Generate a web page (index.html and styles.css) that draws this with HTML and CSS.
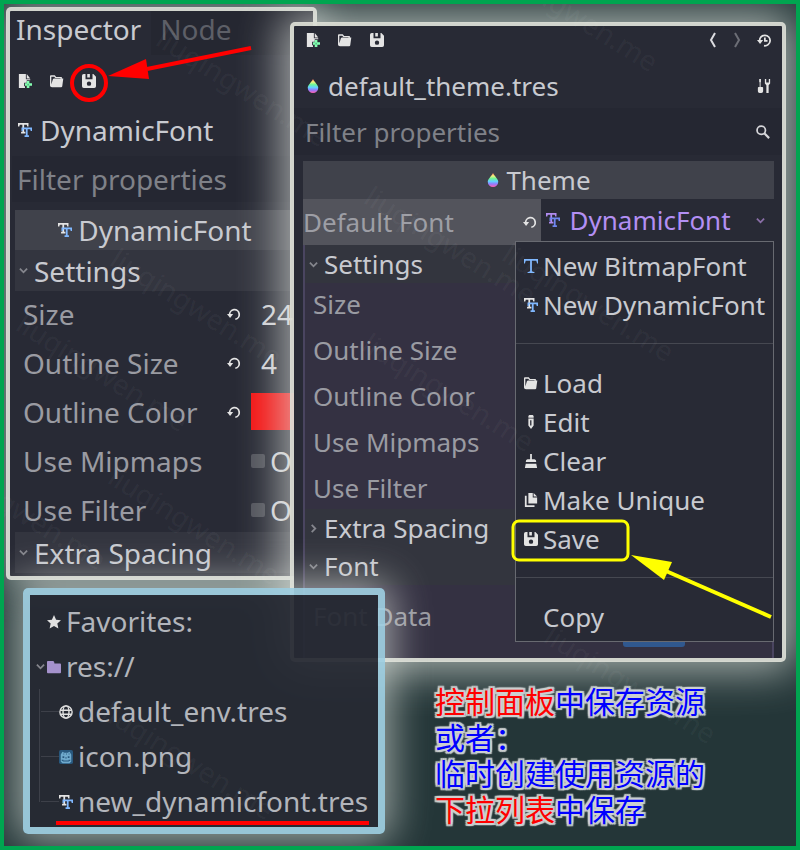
FILE: index.html
```html
<!DOCTYPE html>
<html lang="zh-CN">
<head>
<meta charset="utf-8">
<meta name="viewport" content="width=device-width, initial-scale=1">
<title>Inspector</title>
<link rel="stylesheet" href="styles.css">
</head>
<body>
<svg class="defs" aria-hidden="true">
  <defs>
    <linearGradient id="rainbow" x1="0" y1="0" x2="0" y2="1">
      <stop offset="0" stop-color="#ff6b5e"/><stop offset=".2" stop-color="#f6f27a"/>
      <stop offset=".4" stop-color="#6df59a"/><stop offset=".6" stop-color="#62d0ff"/>
      <stop offset=".78" stop-color="#8f7bff"/><stop offset="1" stop-color="#ff5fb0"/>
    </linearGradient>
  </defs>
  <symbol id="i-new" viewBox="0 0 16 16">
    <path fill="#e4e4e4" d="M1 0v16h7v-2H7v-4h3V7h4V6H9V0zM10 0v5h4z"/>
    <path fill="#84ffb1" d="M10 8h3v2.500h3v3h-3V16h-3v-2.500H8v-3h2z"/>
    <path fill="#2b8a5c" d="M11 11h1v2h-1z"/>
  </symbol>
  <symbol id="i-load" viewBox="0 0 16 16">
    <path fill="#e4e4e4" d="M1 1.500h4.500l1.500 2h6.500V5h1.700L14 14q-.2 1-1.300 1H2.300Q0 15 0 13V2.500q0-1 1-1zM1.500 3v9L3.300 6Q3.600 5 4.600 5H12v-.3H6L4.800 3z"/>
  </symbol>
  <symbol id="i-save" viewBox="0 0 16 16">
    <path fill="#e4e4e4" fill-rule="evenodd" d="M2 0Q0 0 0 2v12q0 2 2 2h12q2 0 2-2V3l-3-3h-1v6H4V0zM6 0h3v4H6zM8 8.500a2.500 2.500 0 1 1 0 5 2.500 2.500 0 0 1 0-5z"/>
  </symbol>
  <symbol id="i-font" viewBox="0 0 16 16">
    <path fill="var(--font-a, #e4e4e4)" d="M0 0h12v4h-1.500L10 2H7v8h1.500v2h-5v-2H5V2H2L1.500 4H0z"/>
    <path fill="var(--font-b, #80b8ff)" d="M4 5h12v4h-1.500L14 7h-3v7h1.500v2h-5v-2H9V7H6L5.500 9H4z"/>
  </symbol>
  <symbol id="i-bitmap" viewBox="0 0 16 16">
    <path fill="#80b8ff" d="M0 0h16v5h-1l-1-3H9v12l3 1v1H4v-1l3-1V2H2L1 5H0z"/>
  </symbol>
  <symbol id="i-reset" viewBox="0 0 16 16">
    <path fill="none" stroke="#e4e4e4" stroke-width="2" d="M3 9a5.500 5.500 0 1 1 6.500 5"/>
    <path fill="#e4e4e4" d="M0 8h7l-3.500 4.500z"/>
  </symbol>
  <symbol id="i-history" viewBox="0 0 16 16">
    <path fill="none" stroke="#e4e4e4" stroke-width="2" d="M3 9a6 6 0 1 1 5 5.500M9 5v4h3"/>
    <path fill="#e4e4e4" d="M0 8h7l-3.500 4.500z"/>
  </symbol>
  <symbol id="i-back" viewBox="0 0 8 16"><path fill="none" stroke="currentColor" stroke-width="2" d="M6 1 2 8l4 7"/></symbol>
  <symbol id="i-fwd" viewBox="0 0 8 16"><path fill="none" stroke="currentColor" stroke-width="2" d="m2 1 4 7-4 7"/></symbol>
  <symbol id="i-tools" viewBox="0 0 16 16">
    <path fill="#e4e4e4" d="M2.500 0h2v3l-.4 1v5H6q1 0 1 1v4q0 2-2 2H3q-2 0-2-2v-4q0-1 1-1h1V4l-.5-1zM9 0h1.500v4h3V0H15v5l-1.700 2v9h-2.600V7L9 5z"/>
  </symbol>
  <symbol id="i-search" viewBox="0 0 16 16">
    <circle cx="6" cy="6" r="4.800" fill="none" stroke="#d6d6da" stroke-width="2"/>
    <path stroke="#d6d6da" stroke-width="2.500" d="m9.500 9.500 5.500 5.500"/>
  </symbol>
  <symbol id="i-down" viewBox="0 0 10 10"><path fill="none" stroke="currentColor" stroke-width="2" d="m1 3 4 4 4-4"/></symbol>
  <symbol id="i-right" viewBox="0 0 10 10"><path fill="none" stroke="currentColor" stroke-width="2" d="m3 1 4 4-4 4"/></symbol>
  <symbol id="i-theme" viewBox="0 0 16 16"><path fill="url(#rainbow)" d="M8 0c2 4 6 7 6 10a6 6 0 0 1-12 0c0-3 4-6 6-10z"/></symbol>
  <symbol id="i-edit" viewBox="0 0 16 16">
    <path fill="#e4e4e4" fill-rule="evenodd" d="M6 0h4l1 1v2H5V1zM5 4h6v8l-3 4-3-4zM7 6v6h1.500V6z"/>
  </symbol>
  <symbol id="i-clear" viewBox="0 0 16 16">
    <path fill="#e4e4e4" d="M7 0h2v6h3q2 0 2 3H2q0-3 2-3h3zM2 11h12l1 5H1z"/>
  </symbol>
  <symbol id="i-copy" viewBox="0 0 16 16">
    <path fill="#e4e4e4" d="M1 3h2v11h9v2H1zM5 0h5v5h5v7H5zM11 0l4 4h-4z"/>
  </symbol>
  <symbol id="i-star" viewBox="0 0 16 16"><path fill="#e0e0e0" d="m8 0 2.400 5.300 5.600.7-4.200 3.800L13 15.500l-5-2.900-5 2.900 1.200-5.700L0 6l5.600-.7z"/></symbol>
  <symbol id="i-folder" viewBox="0 0 16 16"><path fill="#a592cc" d="M1 1h6q1.500 0 1.500 3H15q1 0 1 1v9q0 1-1 1H1q-1 0-1-1V2q0-1 1-1z"/></symbol>
  <symbol id="i-globe" viewBox="0 0 16 16">
    <g fill="none" stroke="#e0e0e0" stroke-width="1.600"><circle cx="8" cy="8" r="7"/><ellipse cx="8" cy="8" rx="3.400" ry="7"/><path d="M1.500 6h13M1.500 10.500h13"/></g>
  </symbol>
  <symbol id="i-godot" viewBox="0 0 16 16">
    <rect width="16" height="16" rx="2" fill="#28587e"/>
    <path fill="#6fa9cc" d="M2 5l2-3 2 1h4l2-1 2 3v8l-2 2H4l-2-2z"/>
    <path fill="#28587e" d="M4 7h2v2H4zM10 7h2v2h-2zM7.500 8h1v2h-1zM3 11h2v1h6v-1h2v1l-2 1H5l-2-1zM5 4h1v1H5zM8 4h1v1H8zM11 4h1v1h-1z"/>
  </symbol>
</svg>

<main class="stage">

  <section class="window inspector" aria-label="Inspector">
    <div class="tabs" role="tablist">
      <button class="tab active" role="tab" aria-selected="true">Inspector</button>
      <button class="tab" role="tab" aria-selected="false">Node</button>
    </div>
    <div class="toolbar">
      <button aria-label="New"><svg class="icon"><use href="#i-new"/></svg></button>
      <button aria-label="Load"><svg class="icon"><use href="#i-load"/></svg></button>
      <button aria-label="Save"><svg class="icon"><use href="#i-save"/></svg></button>
    </div>
    <div class="object"><svg class="icon"><use href="#i-font"/></svg><span>DynamicFont</span></div>
    <div class="filter"><input type="text" placeholder="Filter properties" aria-label="Filter properties"></div>
    <div class="body">
      <div class="category"><svg class="icon"><use href="#i-font"/></svg>DynamicFont</div>
      <button class="group"><svg class="arrow"><use href="#i-down"/></svg>Settings</button>
      <div class="rows">
        <div class="row"><label for="size">Size</label><button aria-label="Reset size"><svg class="icon"><use href="#i-reset"/></svg></button><input class="number" id="size" type="text" value="24"></div>
        <div class="row"><label for="osize">Outline Size</label><button aria-label="Reset outline size"><svg class="icon"><use href="#i-reset"/></svg></button><input class="number" id="osize" type="text" value="4"></div>
        <div class="row"><label for="ocolor">Outline Color</label><button aria-label="Reset outline color"><svg class="icon"><use href="#i-reset"/></svg></button><input class="swatch" id="ocolor" type="color" value="#f41414"></div>
        <div class="row"><label for="mip">Use Mipmaps</label><span></span><span class="check"><input id="mip" type="checkbox">On</span></div>
        <div class="row"><label for="filt">Use Filter</label><span></span><span class="check"><input id="filt" type="checkbox">On</span></div>
      </div>
      <button class="group"><svg class="arrow"><use href="#i-down"/></svg>Extra Spacing</button>
    </div>
  </section>

  <section class="window theme" aria-label="Theme">
    <div class="toolbar">
      <button aria-label="New"><svg class="icon"><use href="#i-new"/></svg></button>
      <button aria-label="Load"><svg class="icon"><use href="#i-load"/></svg></button>
      <button aria-label="Save"><svg class="icon"><use href="#i-save"/></svg></button>
      <span class="history">
        <button aria-label="Back"><svg class="nav"><use href="#i-back"/></svg></button>
        <button class="off" aria-label="Forward"><svg class="nav"><use href="#i-fwd"/></svg></button>
        <button aria-label="History"><svg class="icon"><use href="#i-history"/></svg></button>
      </span>
    </div>
    <div class="object"><svg class="icon"><use href="#i-theme"/></svg><span>default_theme.tres</span><button aria-label="Tools"><svg class="icon"><use href="#i-tools"/></svg></button></div>
    <div class="filter"><input type="text" placeholder="Filter properties" aria-label="Filter properties"><svg class="icon"><use href="#i-search"/></svg></div>
    <div class="body">
      <div class="category"><svg class="icon"><use href="#i-theme"/></svg>Theme</div>
      <div class="resource">
        <div class="resource-label"><span>Default Font</span><button aria-label="Reset default font"><svg class="icon"><use href="#i-reset"/></svg></button></div>
        <div class="resource-value">
          <button class="picker" aria-haspopup="menu" aria-expanded="true"><svg class="icon"><use href="#i-font"/></svg><span>DynamicFont</span><svg class="arrow"><use href="#i-down"/></svg></button>
        </div>
      </div>
      <div class="sub">
        <button class="group"><svg class="arrow"><use href="#i-down"/></svg>Settings</button>
        <div class="rows">
          <div class="row">Size</div>
          <div class="row">Outline Size</div>
          <div class="row">Outline Color</div>
          <div class="row">Use Mipmaps</div>
          <div class="row">Use Filter</div>
        </div>
        <button class="group"><svg class="arrow"><use href="#i-right"/></svg>Extra Spacing</button>
        <button class="group"><svg class="arrow"><use href="#i-down"/></svg>Font</button>
        <div class="row data">Font Data<span class="bar"></span></div>
      </div>
    </div>
    <div class="menu" role="menu">
      <button role="menuitem"><svg class="icon"><use href="#i-bitmap"/></svg>New BitmapFont</button>
      <button role="menuitem"><svg class="icon"><use href="#i-font"/></svg>New DynamicFont</button>
      <hr>
      <button role="menuitem"><svg class="icon"><use href="#i-load"/></svg>Load</button>
      <button role="menuitem"><svg class="icon"><use href="#i-edit"/></svg>Edit</button>
      <button role="menuitem"><svg class="icon"><use href="#i-clear"/></svg>Clear</button>
      <button role="menuitem"><svg class="icon"><use href="#i-copy"/></svg>Make Unique</button>
      <button role="menuitem"><svg class="icon"><use href="#i-save"/></svg>Save</button>
      <hr>
      <button role="menuitem"><svg class="icon"></svg>Copy</button>
    </div>
  </section>

  <section class="window files" aria-label="Files">
    <ul class="tree">
      <li><span class="arrow"></span><svg class="icon"><use href="#i-star"/></svg>Favorites:</li>
      <li><svg class="arrow"><use href="#i-down"/></svg><svg class="icon"><use href="#i-folder"/></svg>res://
        <ul>
          <li><svg class="icon"><use href="#i-globe"/></svg>default_env.tres</li>
          <li><svg class="icon"><use href="#i-godot"/></svg>icon.png</li>
          <li><svg class="icon"><use href="#i-font"/></svg><span class="marked">new_dynamicfont.tres</span></li>
        </ul>
      </li>
    </ul>
  </section>

  <p class="note"><em>控制面板</em>中保存资源<br>或者：<br>临时创建使用资源的<br><em>下拉列表</em>中保存</p>

  <div class="marks" aria-hidden="true">
    <span class="mark m1">liuqingwen.me</span><span class="mark m2">liuqingwen.me</span>
    <span class="mark m3">liuqingwen.me</span><span class="mark m4">liuqingwen.me</span>
    <span class="mark m5">liuqingwen.me</span><span class="mark m6">liuqingwen.me</span>
    <span class="mark m7">liuqingwen.me</span><span class="mark m8">liuqingwen.me</span>
    <span class="mark m9">liuqingwen.me</span><span class="mark m10">liuqingwen.me</span>
    <span class="mark m11">liuqingwen.me</span>
  </div>

  <svg class="callouts" width="800" height="850" viewBox="0 0 800 850" aria-hidden="true">
    <g fill="none" stroke="#f00" stroke-width="4">
      <circle cx="89" cy="83" r="17"/>
      <path d="M147 69 251 48"/>
    </g>
    <path fill="#f00" d="m108 76 38-17 3 20z"/>
    <g fill="none" stroke="#ff0">
      <rect x="513" y="521" width="115" height="39" rx="6" stroke-width="3"/>
      <path stroke-width="4" d="m666 571 105 46"/>
    </g>
    <path fill="#ff0" d="m631 555 41 7-8 18z"/>
  </svg>
</main>
</body>
</html>
```
FILE: styles.css
```css
* { box-sizing: border-box; }

body {
  margin: 0;
  font-family: "Noto Sans", "Noto Sans CJK SC", sans-serif;
}

button, input {
  margin: 0;
  padding: 0;
  border: 0;
  background: none;
  color: inherit;
  font: inherit;
  text-align: left;
}

button { display: flex; align-items: center; }
input { min-width: 0; outline: 0; }
.defs { position: absolute; width: 0; height: 0; }
.icon { flex: none; width: 14px; height: 14px; }
.arrow { flex: none; width: 9px; height: 9px; color: #85868d; }

.stage {
  position: relative;
  min-height: 850px;
  overflow: hidden;
  border: 4px solid #00a550;
  background: #243638;
  color: #c8cad0;
}

/* Windows on the canvas */
.window {
  position: absolute;
  border: 4px solid rgba(219, 221, 213, .95);
  border-radius: 5px;
  background: #282a35;
  background-clip: padding-box;
  white-space: nowrap;
}

.inspector {
  left: 2px;
  top: 3px;
  width: 311px;
  font-size: 28px;
  box-shadow: 0 0 36px 4px rgba(224, 232, 226, .6);
}

.theme {
  left: 286px;
  top: 18px;
  right: 10px;
  font-size: 26px;
  box-shadow: 0 0 44px 8px rgba(228, 232, 226, .7);
}

.files {
  left: 19px;
  top: 584px;
  width: 362px;
  padding: 4px 0 3px;
  border: 7px solid rgba(160, 208, 226, .93);
  background: rgba(38, 41, 51, .94);
  background-clip: padding-box;
  color: #b2b5bb;
  font-size: 28px;
  box-shadow: 0 0 40px 6px rgba(228, 232, 226, .65);
}

/* Shared inspector parts */
.toolbar { display: flex; align-items: center; gap: 18px; padding: 0 8px; }
.object { display: flex; align-items: center; gap: 8px; }
.filter { display: flex; align-items: center; background: #252732; }
.filter input { flex: 1; color: #868890; }
.filter input::placeholder { color: #7f8188; opacity: 1; }
.category { display: flex; align-items: center; justify-content: center; gap: 6px; background: #40424b; }
.group { width: 100%; gap: 6px; padding-left: 4px; background: #33353f; }
.rows { display: flex; flex-direction: column; gap: 4px; }
.row { color: #9a9ba2; }

/* Left inspector */
.tabs { display: flex; height: 44px; }
.tab { padding: 0 10px 8px 6px; }
.tab + .tab { flex: 1; padding: 0 9px 8px; background: #252731; color: #5d5f67; }
.inspector .toolbar { height: 52px; }
.inspector .object { height: 46px; padding-left: 8px; }
.inspector .filter { height: 46px; margin: 3px 0 8px 2px; padding-left: 5px; }
.inspector .body { margin-left: 5px; padding-bottom: 3px; }
.inspector .category { height: 40px; padding-right: 18px; }
.inspector .group { height: 41px; }
.inspector .row {
  display: grid;
  grid-template-columns: 204px 14px 1fr;
  align-items: center;
  height: 45px;
  padding-left: 8px;
}
.inspector .row > :last-child { margin-left: 10px; }
.row .number { width: 48px; padding-left: 10px; color: #d0d1d6; }
.row .swatch { width: 48px; height: 37px; }
.swatch::-webkit-color-swatch-wrapper { padding: 0; }
.swatch::-webkit-color-swatch { border: 0; border-radius: 0; }
.check { display: flex; align-items: center; gap: 5px; color: #d0d1d6; }
.check input { width: 14px; height: 14px; appearance: none; border-radius: 2px; background: #50525a; }

/* Right inspector */
.theme .toolbar { height: 28px; padding: 0 11px 0 12px; }
.theme .history { display: flex; align-items: center; gap: 16px; margin-left: auto; }
.nav { width: 8px; height: 16px; color: #dcdce0; }
.off .nav { color: #6c6e76; }
.theme .object { height: 54px; padding: 10px 11px 0 12px; }
.object button { margin-left: auto; }
.theme .filter { height: 47px; margin-bottom: 6px; padding: 0 12px 0 11px; }
.theme .body { margin: 0 8px 0 9px; }
.theme .category { height: 38px; }
.resource { display: flex; height: 46px; }
.resource-label {
  display: flex;
  flex: 1;
  align-items: center;
  justify-content: space-between;
  padding-right: 4px;
  background: #53545c;
  color: #9d9ea5;
}
.resource-value { flex: 1; }
.picker {
  --font-a: #b18cf0;
  --font-b: #6f86f0;
  width: 100%;
  height: 42px;
  gap: 10px;
  padding: 0 9px 0 5px;
  color: #b38ff3;
}
.picker .arrow { margin-left: auto; color: #8a6fa8; }
.sub { height: 413px; border: solid #4a4560; border-width: 0 2px; background: #343142; }
.theme .group { height: 38px; background: #33353e; }
.theme .row { display: flex; align-items: center; height: 42px; padding-left: 8px; }
.theme .row.data { position: relative; height: 62px; }
.bar {
  position: absolute;
  left: 318px;
  bottom: 0;
  width: 62px;
  height: 14px;
  border-radius: 3px;
  background: #30588f;
}

.menu {
  position: absolute;
  top: 215px;
  right: 8px;
  width: 259px;
  padding: 4px 0 5px;
  border: 1px solid #686a71;
  background: #282a35;
}
.menu button { width: 100%; height: 39px; gap: 5px; padding-left: 8px; }
.menu hr { height: 1px; margin: 19px 0; border: 0; background: #464851; }

/* File tree */
.tree, .tree ul { margin: 0; padding: 0; list-style: none; }
.tree li { display: flex; flex-wrap: wrap; align-items: center; line-height: 45px; }
.tree > li { padding-left: 6px; }
.tree > li > .arrow { margin-right: 2px; }
.tree .icon { margin-right: 5px; }
.tree ul { position: relative; width: 100%; padding-left: 23px; }
.tree ul::before {
  content: "";
  position: absolute;
  left: 3px;
  top: 0;
  bottom: 22px;
  border-left: 1px solid #3d4049;
}
.tree ul li::before {
  content: "";
  width: 18px;
  margin-left: -18px;
  border-top: 1px solid #3d4049;
}
.marked { position: relative; }
.marked::after {
  content: "";
  position: absolute;
  left: -22px;
  right: -1px;
  bottom: -1px;
  height: 4px;
  background: #f00;
}

/* Caption */
.note {
  position: absolute;
  left: 431px;
  top: 678px;
  margin: 0;
  color: #00f;
  font: 30px/36px "Noto Sans CJK SC", sans-serif;
  text-shadow:
    2px 0 1px #ccd0d0, -2px 0 1px #ccd0d0, 0 2px 1px #ccd0d0, 0 -2px 1px #ccd0d0,
    2px 2px 1px #ccd0d0, -2px 2px 1px #ccd0d0, 2px -2px 1px #ccd0d0, -2px -2px 1px #ccd0d0;
}
.note em { color: #f00; font-style: normal; }

/* Watermarks */
.marks, .callouts { position: absolute; left: -4px; top: -4px; pointer-events: none; }
.mark {
  position: absolute;
  transform: rotate(32deg);
  transform-origin: 0 50%;
  color: rgba(255, 255, 255, .055);
  font-size: 28px;
  line-height: 30px;
}
.m1 { left: 160px; top: 20px; }
.m2 { left: 114px; top: 240px; }
.m3 { left: 20px; top: 305px; }
.m4 { left: 112px; top: 458px; }
.m5 { left: -62px; top: 443px; }
.m6 { left: 106px; top: 693px; }
.m7 { left: 368px; top: 178px; }
.m8 { left: 366px; top: 325px; }
.m9 { left: 506px; top: 235px; }
.m10 { left: 490px; top: -55px; }
.m11 { left: 548px; top: 617px; }
```
